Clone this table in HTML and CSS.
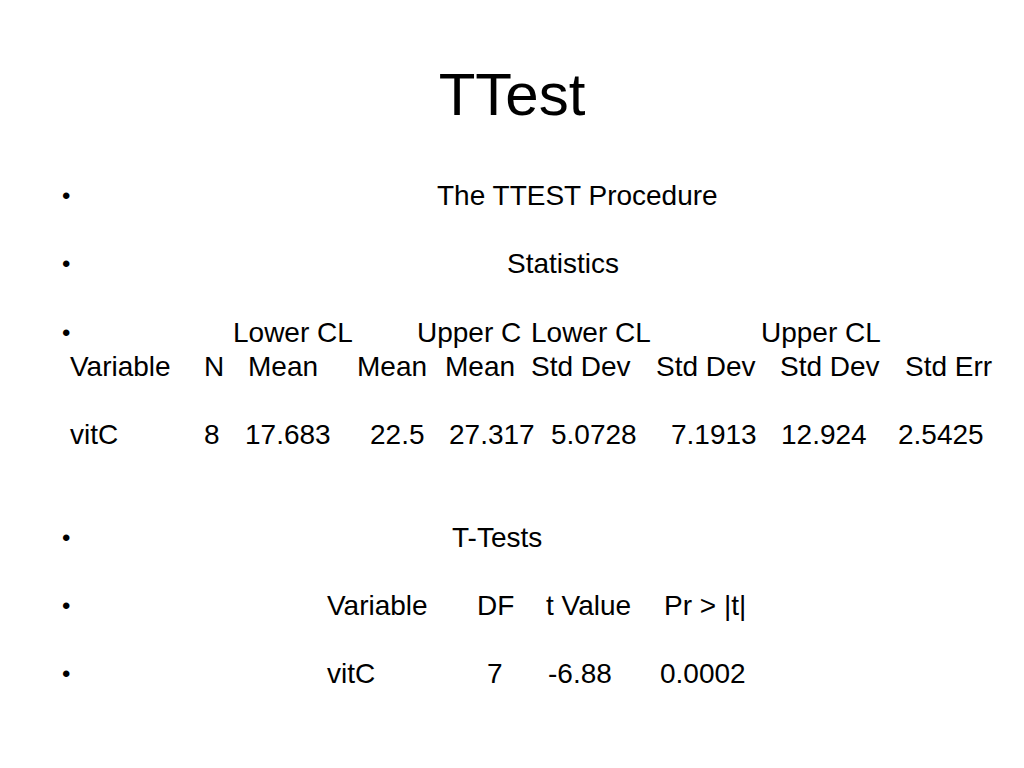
FILE: index.html
```html
<!DOCTYPE html>
<html>
<head>
<meta charset="utf-8">
<link rel="stylesheet" href="styles.css">
</head>
<body>
<div class="slide">
  <h1 class="title">TTest</h1>
  <div class="body">
    <div class="para gap">
      <span class="bullet">•</span>
      <div class="line"><span class="t-proc">The TTEST Procedure</span></div>
    </div>
    <div class="para gap">
      <span class="bullet">•</span>
      <div class="line"><span class="t-stats">Statistics</span></div>
    </div>
    <div class="para gap">
      <span class="bullet">•</span>
      <div class="lines">
        <div class="row r-h1"><span></span><span>Lower CL</span><span>Upper C</span><span>Lower CL</span><span>Upper CL</span></div>
        <div class="row r-h2"><span>Variable</span><span>N</span><span>Mean</span><span>Mean</span><span>Mean</span><span>Std Dev</span><span>Std Dev</span><span>Std Dev</span><span>Std Err</span></div>
      </div>
    </div>
    <div class="para gap2">
      <span class="bullet"></span>
      <div class="row r-d"><span>vitC</span><span>8</span><span>17.683</span><span>22.5</span><span>27.317</span><span>5.0728</span><span>7.1913</span><span>12.924</span><span>2.5425</span></div>
    </div>
    <div class="para gap">
      <span class="bullet">•</span>
      <div class="line"><span class="t-tests">T-Tests</span></div>
    </div>
    <div class="para gap">
      <span class="bullet">•</span>
      <div class="row r-th"><span>Variable</span><span>DF</span><span>t Value</span><span>Pr &gt; |t|</span></div>
    </div>
    <div class="para">
      <span class="bullet">•</span>
      <div class="row r-td"><span>vitC</span><span>7</span><span>-6.88</span><span>0.0002</span></div>
    </div>
  </div>
</div>
</body>
</html>
```
FILE: styles.css
```css
html, body {
  margin: 0;
  padding: 0;
  background: #ffffff;
}
.slide {
  width: 1024px;
  height: 768px;
  font-family: "Liberation Sans", Arial, sans-serif;
  color: #000;
  overflow: hidden;
}
.title {
  margin: 65px 0 0 0;
  height: 64px;
  font-size: 60px;
  line-height: 60px;
  font-weight: normal;
  text-align: center;
}
.body {
  margin-top: 50px;
  font-size: 28px;
  line-height: 34.15px;
}
.para {
  display: flex;
}
.para.gap { margin-bottom: 34.15px; }
.para.gap2 { margin-bottom: 68.3px; }
.bullet {
  width: 0;
  padding-left: 62px;
  box-sizing: content-box;
  flex: none;
  font-size: 24px;
}
.line, .lines { flex: 1; }
.t-proc { margin-left: 375px; }
.t-stats { margin-left: 445px; }
.t-tests { margin-left: 390px; }
.row {
  display: grid;
  white-space: nowrap;
  margin-left: -62px;
}
.r-h1 { grid-template-columns: 163px 184px 114px 230px auto; padding-left: 70px; }
.r-h2 { grid-template-columns: 134px 44px 109px 88px 86px 125px 124px 125px auto; padding-left: 70px; }
.r-d  { grid-template-columns: 134px 41px 125px 79px 102px 120px 110px 117px auto; padding-left: 70px; }
.r-th { grid-template-columns: 150px 69px 118px auto; padding-left: 327px; }
.r-td { grid-template-columns: 160px 61px 112px auto; padding-left: 327px; }
```
